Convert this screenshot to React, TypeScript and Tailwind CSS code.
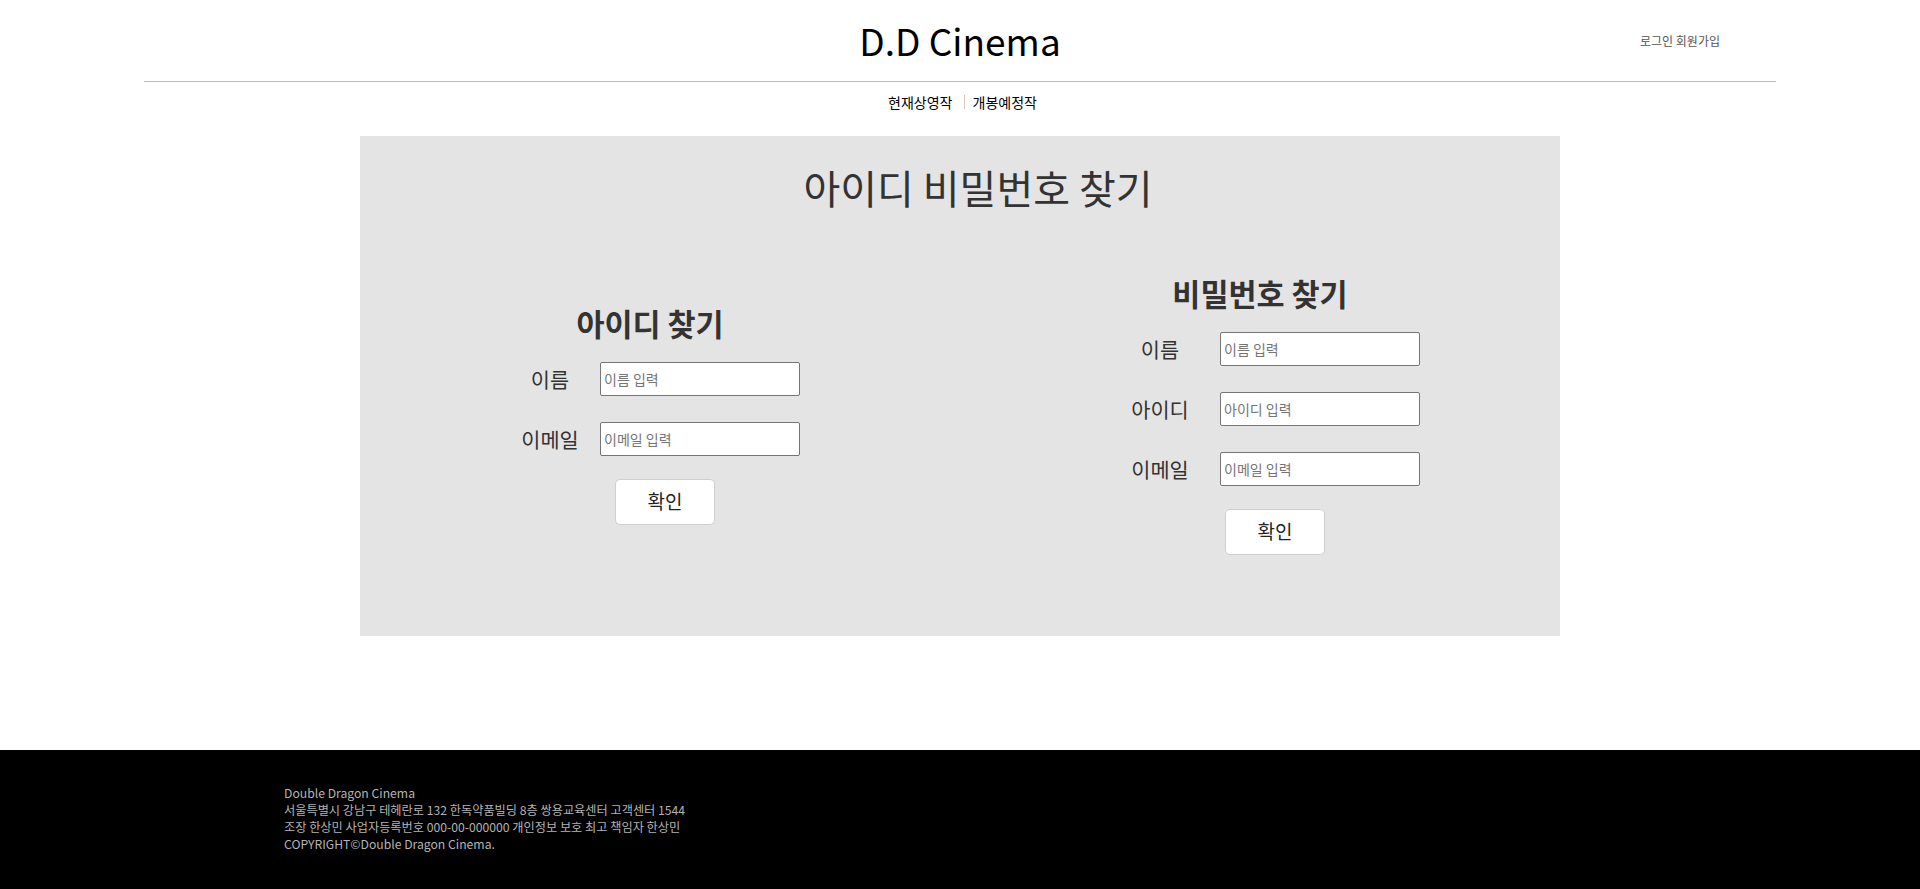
import type { ReactNode } from "react";

function Field({ label, placeholder, labelWidth }: { label: string; placeholder: string; labelWidth: string }) {
  return (
    <div className="flex items-center">
      <label className={`${labelWidth} text-center text-[20.8px] leading-[28px] text-[#333]`}>{label}</label>
      <input
        placeholder={placeholder}
        className="h-[34px] w-[200px] rounded-[2px] border border-[#767676] bg-white px-[3px] text-[14px] text-black outline-none placeholder:text-[#757575]"
      />
    </div>
  );
}

function FindBox({
  title,
  width,
  buttonOffset,
  children,
}: {
  title: string;
  width: string;
  buttonOffset: string;
  children: ReactNode;
}) {
  return (
    <div className={`flex flex-col ${width}`}>
      <h3 className="text-center text-[30.5px] font-bold leading-[40px] text-[#333]">{title}</h3>
      <div className="mt-[19px] flex flex-col gap-[26px]">{children}</div>
      <button
        className={`mt-[23px] ${buttonOffset} h-[46px] w-[100px] rounded-[5px] border border-[#cfcfcf] bg-white text-[19px] text-[#222]`}
      >
        확인
      </button>
    </div>
  );
}

export default function App() {
  return (
    <div className="min-h-screen bg-white font-['Noto_Sans_CJK_KR','Noto_Sans',sans-serif] text-[#333]">
      <header className="mx-auto w-[85%] border-b border-[#b8b8b8]">
        <div className="grid h-[81px] grid-cols-[1fr_auto_1fr]">
          <div />
          <h1 className="pt-[11px] text-[37px] leading-[58px] text-black">D.D Cinema</h1>
          <div className="flex justify-end pt-[32px] pr-[56px] text-[12px] leading-[17px] text-[#555]">
            <a className="cursor-pointer">로그인</a>
            <span>&nbsp;</span>
            <a className="cursor-pointer">회원가입</a>
          </div>
        </div>
      </header>

      <nav className="flex items-center justify-center pt-[10px] pl-[5px] text-[14px] leading-[20px] text-black">
        <a className="cursor-pointer pr-[11px]">현재상영작</a>
        <span className="h-[14px] w-px bg-[#d4c8bc]" />
        <a className="cursor-pointer pl-[8px]">개봉예정작</a>
      </nav>

      <section className="mx-auto mt-[24px] h-[500px] w-[1200px] bg-[#e4e4e4] pt-[22px]">
        <h2 className="pl-[36px] text-center text-[40px] leading-[58px] text-[#333]">아이디 비밀번호 찾기</h2>

        <div className="flex h-[395px] items-center gap-[300px] pl-[140px]">
          <FindBox title="아이디 찾기" width="w-[300px]" buttonOffset="ml-[115px]">
            <Field label="이름" placeholder="이름 입력" labelWidth="w-[100px]" />
            <Field label="이메일" placeholder="이메일 입력" labelWidth="w-[100px]" />
          </FindBox>

          <FindBox title="비밀번호 찾기" width="w-[320px]" buttonOffset="ml-[125px]">
            <Field label="이름" placeholder="이름 입력" labelWidth="w-[120px]" />
            <Field label="아이디" placeholder="아이디 입력" labelWidth="w-[120px]" />
            <Field label="이메일" placeholder="이메일 입력" labelWidth="w-[120px]" />
          </FindBox>
        </div>
      </section>

      <footer className="mt-[114px] min-h-[140px] bg-black pt-[35px] pb-[40px]">
        <div className="mx-auto w-[1352px] text-[12.2px] leading-[17px] text-[#b4b4b4]">
          <p>Double Dragon Cinema</p>
          <p>서울특별시 강남구 테헤란로 132 한독약품빌딩 8층 쌍용교육센터 고객센터 1544</p>
          <p>조장 한상민 사업자등록번호 000-00-000000 개인정보 보호 최고 책임자 한상민</p>
          <p>COPYRIGHT©Double Dragon Cinema.</p>
        </div>
      </footer>
    </div>
  );
}
